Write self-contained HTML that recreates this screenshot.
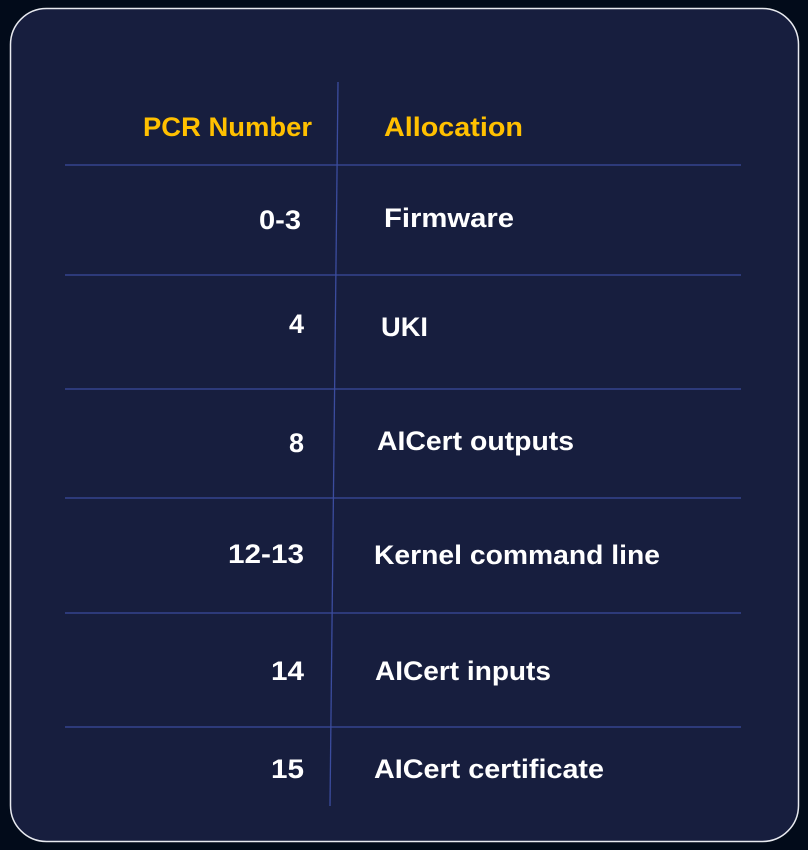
<!DOCTYPE html>
<html><head><meta charset="utf-8"><style>
html,body{margin:0;padding:0;background:#020b1a;width:808px;height:850px;overflow:hidden}
svg{display:block}
text{font-family:"Liberation Sans",sans-serif;font-weight:bold;font-size:27px}
</style></head><body>
<svg width="808" height="850" viewBox="0 0 808 850">
<rect x="0" y="0" width="808" height="850" fill="#020b1a"/>
<rect x="10.5" y="8.5" width="788" height="833" rx="36" fill="#171e3e" stroke="#e8eaf0" stroke-width="1.5"/>
<g stroke="#3b4c9e" stroke-width="1.3">
<line x1="65" y1="165" x2="741" y2="165"/>
<line x1="65" y1="275" x2="741" y2="275"/>
<line x1="65" y1="389" x2="741" y2="389"/>
<line x1="65" y1="498" x2="741" y2="498"/>
<line x1="65" y1="613" x2="741" y2="613"/>
<line x1="65" y1="727" x2="741" y2="727"/>
<line x1="338" y1="82" x2="330" y2="806"/>
</g>
<g fill="#ffc000">
<text x="312" y="136" text-anchor="end" textLength="169" lengthAdjust="spacingAndGlyphs">PCR Number</text>
<text x="384" y="136" textLength="139" lengthAdjust="spacingAndGlyphs">Allocation</text>
</g>
<g fill="#ffffff">
<text x="301" y="229" text-anchor="end" textLength="42" lengthAdjust="spacingAndGlyphs">0-3</text>
<text x="304" y="333" text-anchor="end">4</text>
<text x="304" y="452" text-anchor="end">8</text>
<text x="304" y="563" text-anchor="end" textLength="76" lengthAdjust="spacingAndGlyphs">12-13</text>
<text x="304" y="680" text-anchor="end" textLength="33" lengthAdjust="spacingAndGlyphs">14</text>
<text x="304" y="778" text-anchor="end" textLength="33" lengthAdjust="spacingAndGlyphs">15</text>
<text x="384" y="227" textLength="130" lengthAdjust="spacingAndGlyphs">Firmware</text>
<text x="381" y="336" textLength="47" lengthAdjust="spacingAndGlyphs">UKI</text>
<text x="377" y="450" textLength="197" lengthAdjust="spacingAndGlyphs">AICert outputs</text>
<text x="374" y="564" textLength="286" lengthAdjust="spacingAndGlyphs">Kernel command line</text>
<text x="375" y="680" textLength="176" lengthAdjust="spacingAndGlyphs">AICert inputs</text>
<text x="374" y="778" textLength="230" lengthAdjust="spacingAndGlyphs">AICert certificate</text>
</g>
</svg>
</body></html>
